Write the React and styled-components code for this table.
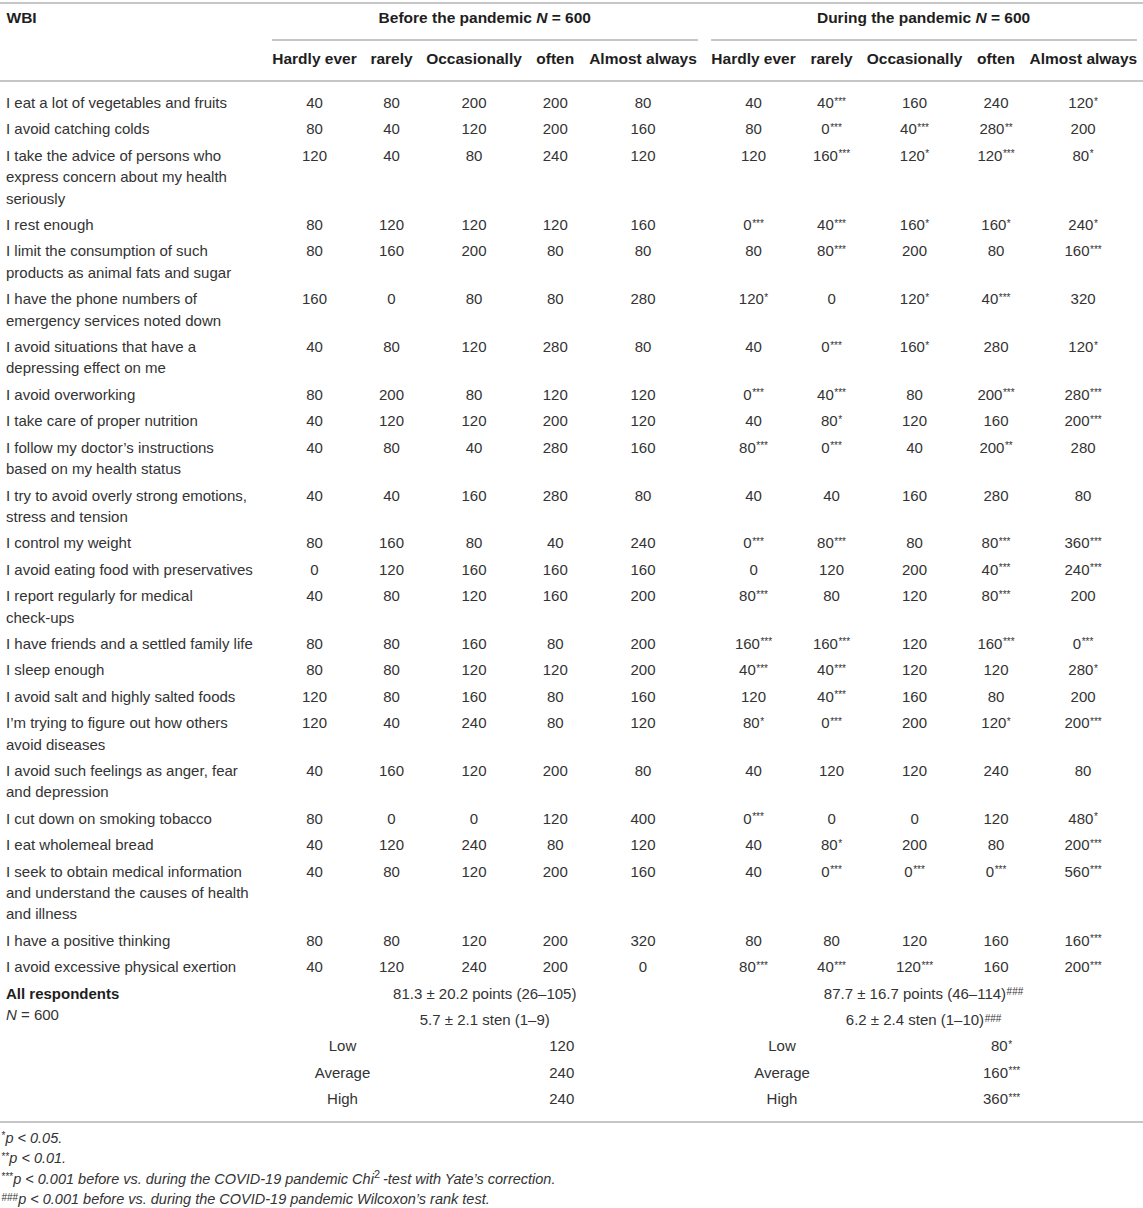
import React from 'react'
import styled, { createGlobalStyle } from 'styled-components'

const rows = [
    ['I eat a lot of vegetables and fruits', '40 80 200 200 80', '40 40*** 160 240 120*'],
    ['I avoid catching colds', '80 40 120 200 160', '80 0*** 40*** 280** 200'],
    ['I take the advice of persons who express concern about my health seriously', '120 40 80 240 120', '120 160*** 120* 120*** 80*'],
    ['I rest enough', '80 120 120 120 160', '0*** 40*** 160* 160* 240*'],
    ['I limit the consumption of such products as animal fats and sugar', '80 160 200 80 80', '80 80*** 200 80 160***'],
    ['I have the phone numbers of emergency services noted down', '160 0 80 80 280', '120* 0 120* 40*** 320'],
    ['I avoid situations that have a depressing effect on me', '40 80 120 280 80', '40 0*** 160* 280 120*'],
    ['I avoid overworking', '80 200 80 120 120', '0*** 40*** 80 200*** 280***'],
    ['I take care of proper nutrition', '40 120 120 200 120', '40 80* 120 160 200***'],
    ['I follow my doctor’s instructions based on my health status', '40 80 40 280 160', '80*** 0*** 40 200** 280'],
    ['I try to avoid overly strong emotions, stress and tension', '40 40 160 280 80', '40 40 160 280 80'],
    ['I control my weight', '80 160 80 40 240', '0*** 80*** 80 80*** 360***'],
    ['I avoid eating food with preservatives', '0 120 160 160 160', '0 120 200 40*** 240***'],
    ['I report regularly for medical check\u2011ups', '40 80 120 160 200', '80*** 80 120 80*** 200'],
    ['I have friends and a settled family life', '80 80 160 80 200', '160*** 160*** 120 160*** 0***'],
    ['I sleep enough', '80 80 120 120 200', '40*** 40*** 120 120 280*'],
    ['I avoid salt and highly salted foods', '120 80 160 80 160', '120 40*** 160 80 200'],
    ['I’m trying to figure out how others avoid diseases', '120 40 240 80 120', '80* 0*** 200 120* 200***'],
    ['I avoid such feelings as anger, fear and depression', '40 160 120 200 80', '40 120 120 240 80'],
    ['I cut down on smoking tobacco', '80 0 0 120 400', '0*** 0 0 120 480*'],
    ['I eat wholemeal bread', '40 120 240 80 120', '40 80* 200 80 200***'],
    ['I seek to obtain medical information and understand the causes of health and illness', '40 80 120 200 160', '40 0*** 0*** 0*** 560***'],
    ['I have a positive thinking', '80 80 120 200 320', '80 80 120 160 160***'],
    ['I avoid excessive physical exertion', '40 120 240 200 0', '80*** 40*** 120*** 160 200***']
]

const scale = ['Hardly ever', 'rarely', 'Occasionally', 'often', 'Almost always']
const widths = [265.5, 98, 56, 109, 53.5, 122, 99, 57, 109, 54, 120]

const levels = [
    ['Low', '120', '80*'],
    ['Average', '240', '160***'],
    ['High', '240', '360***']
]

const Value = ({ text }) => {
    const [, num, marks] = text.match(/^([^*#]*)([*#]*)$/)
    return (
        <>
            {num}
            {marks && <Sup>{marks}</Sup>}
        </>
    )
}

const App = () => (
    <>
        <GlobalStyle />
        <Page>
            <Table>
                <colgroup>
                    {widths.map((w, i) => (
                        <col key={i} style={{ width: w }} />
                    ))}
                </colgroup>
                <thead>
                    <tr>
                        <Head rowSpan={2} $align="left" $top>
                            WBI
                        </Head>
                        <Head colSpan={5} $top>
                            <GroupLabel>
                                Before the pandemic <i>N</i> = 600
                            </GroupLabel>
                        </Head>
                        <Head colSpan={5} $top>
                            <GroupLabel>
                                During the pandemic <i>N</i> = 600
                            </GroupLabel>
                        </Head>
                    </tr>
                    <tr>
                        {[...scale, ...scale].map((s, i) => (
                            <Head key={i}>{s}</Head>
                        ))}
                    </tr>
                </thead>
                <tbody>
                    {rows.map(([label, b, d]) => (
                        <tr key={label}>
                            <Label>{label}</Label>
                            {[...b.split(' '), ...d.split(' ')].map((v, i) => (
                                <Cell key={i}>
                                    <Value text={v} />
                                </Cell>
                            ))}
                        </tr>
                    ))}
                    <tr>
                        <Label rowSpan={5}>
                            <b>All respondents</b>
                            <br />
                            <i>N</i> = 600
                        </Label>
                        <Cell colSpan={5}>81.3 ± 20.2 points (26–105)</Cell>
                        <Cell colSpan={5}>
                            87.7 ± 16.7 points (46–114)<Sup>###</Sup>
                        </Cell>
                    </tr>
                    <tr>
                        <Cell colSpan={5}>5.7 ± 2.1 sten (1–9)</Cell>
                        <Cell colSpan={5}>
                            6.2 ± 2.4 sten (1–10)<Sup>###</Sup>
                        </Cell>
                    </tr>
                    {levels.map(([name, b, d]) => (
                        <tr key={name}>
                            <Cell colSpan={2}>{name}</Cell>
                            <Cell colSpan={3}>
                                <Value text={b} />
                            </Cell>
                            <Cell colSpan={2}>{name}</Cell>
                            <Cell colSpan={3}>
                                <Value text={d} />
                            </Cell>
                        </tr>
                    ))}
                </tbody>
            </Table>
            <Notes>
                <Note>
                    <Sup>*</Sup>p &lt; 0.05.
                </Note>
                <Note>
                    <Sup>**</Sup>p &lt; 0.01.
                </Note>
                <Note>
                    <Sup>***</Sup>p &lt; 0.001 before vs. during the COVID-19 pandemic Chi
                    <NoteSup>2</NoteSup>-test with Yate’s correction.
                </Note>
                <Note>
                    <Sup>###</Sup>p &lt; 0.001 before vs. during the COVID-19 pandemic Wilcoxon’s
                    rank test.
                </Note>
            </Notes>
        </Page>
    </>
)

const GlobalStyle = createGlobalStyle`
    body {
        margin: 0;
        background: #fff;
        font-family: "Liberation Sans", Arial, sans-serif;
    }
`

const Page = styled.div`
    width: 1143px;
    padding-top: 2px;
    color: #333;
`

const Table = styled.table`
    width: 1143px;
    table-layout: fixed;
    border-collapse: collapse;
    border-top: 2px solid #c6c6c6;
    border-bottom: 2px solid #c6c6c6;
    font-size: 15px;
    line-height: 21.4px;

    thead tr:last-child th,
    thead th[rowspan] {
        border-bottom: 2px solid #c6c6c6;
    }
    tbody tr:first-child td {
        padding-top: 10px;
    }
    tbody tr:last-child td {
        padding-bottom: 11px;
    }
`

const Head = styled.th`
    padding: ${p => (p.$top ? '3.3px 6.5px 0' : '7.3px 6.5px 10.3px')};
    text-align: ${p => p.$align || 'center'};
    vertical-align: top;
    white-space: nowrap;
    font-size: 15.5px;
    font-weight: bold;
    color: #1e1e1e;
`

const GroupLabel = styled.div`
    padding-bottom: 10.3px;
    border-bottom: 2px solid #c6c6c6;
`

const Cell = styled.td`
    padding: 2.5px 6.5px;
    text-align: center;
    vertical-align: top;
    white-space: nowrap;
`

const Label = styled.td`
    padding: 2.5px 12px 2.5px 6px;
    text-align: left;
    vertical-align: top;

    b {
        color: #1e1e1e;
    }
`

const Sup = styled.sup`
    font-size: 10px;
    line-height: 0;
    vertical-align: baseline;
    position: relative;
    top: -0.35em;
    margin-left: 0.5px;
    font-style: normal;
`

const Notes = styled.div`
    padding: 5px 0 0 1px;
    font-size: 14.5px;
    line-height: 20.6px;
    font-style: italic;
`

const Note = styled.div``

const NoteSup = styled.sup`
    font-size: 11px;
    line-height: 0;
    font-style: normal;
    margin-right: 3px;
`

export default App
